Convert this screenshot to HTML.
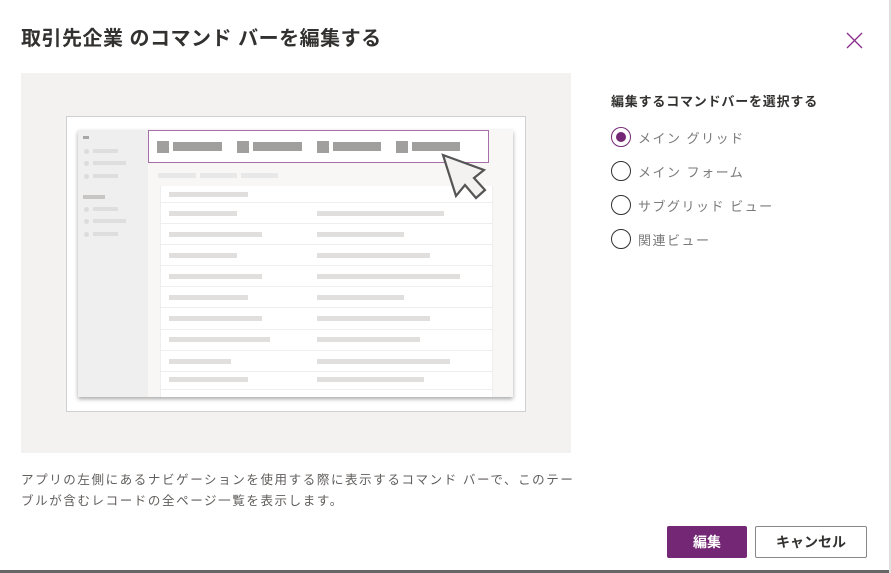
<!DOCTYPE html>
<html><head><meta charset="utf-8"><style>
*{margin:0;padding:0;box-sizing:border-box}
body{width:891px;height:573px;background:#fff;position:relative;overflow:hidden;font-family:"Liberation Sans","Noto Sans CJK JP",sans-serif;color:#323130}
.a{position:absolute}
.t{left:21px;top:22px;font-size:20px;font-weight:bold;color:#323130;letter-spacing:0.5px}
.b{position:absolute;background:#e1dfdd;height:5px}
.c{position:absolute;background:#a19f9d}
.d{position:absolute;width:5px;height:5px;border-radius:50%;background:#dcdcdc}
.s{position:absolute;background:#dedede;height:4px}
.r{position:absolute;left:611px;width:20px;height:20px;border:1.5px solid #323130;border-radius:50%}
.rl{position:absolute;left:638px;font-size:13px;color:#7a7a7a;letter-spacing:1.5px}
</style></head><body>
<div class="a t">取引先企業 のコマンド バーを編集する</div>
<svg class="a" style="left:846px;top:32px" width="17" height="17"><path d="M1 1L16 16M16 1L1 16" stroke="#8a2c8a" stroke-width="1.3"/></svg>
<div class="a" style="left:21px;top:73px;width:550px;height:380px;background:#f3f2f1"></div>
<div class="a" style="left:66px;top:116px;width:460px;height:296px;background:#fff;border:1px solid #d0d0d0"></div>
<div class="a" style="left:78px;top:130px;width:435px;height:267px;background:#f8f7f6;box-shadow:0 2px 4px rgba(0,0,0,.35)"></div>
<div class="a" style="left:78px;top:130px;width:70px;height:267px;background:#efefef"></div>
<div class="a" style="left:83px;top:136px;width:6px;height:3px;background:#a8a8a8"></div>
<div class="d" style="left:84px;top:149px"></div><div class="s" style="left:93px;top:149px;width:25px"></div>
<div class="d" style="left:84px;top:161px"></div><div class="s" style="left:93px;top:161px;width:33px"></div>
<div class="d" style="left:84px;top:174px"></div><div class="s" style="left:93px;top:174px;width:25px"></div>
<div class="a" style="left:83px;top:195px;width:22px;height:4px;background:#c8c6c4"></div>
<div class="d" style="left:84px;top:207px"></div><div class="s" style="left:93px;top:207px;width:25px"></div>
<div class="d" style="left:84px;top:219px"></div><div class="s" style="left:93px;top:219px;width:33px"></div>
<div class="d" style="left:84px;top:232px"></div><div class="s" style="left:93px;top:232px;width:25px"></div>
<div class="a" style="left:148px;top:130px;width:341px;height:33px;border:1.5px solid #a66fa8;background:#fff"></div>
<div class="c" style="left:157px;top:141px;width:12px;height:12px"></div><div class="c" style="left:173px;top:142px;width:49px;height:9px"></div>
<div class="c" style="left:237px;top:141px;width:12px;height:12px"></div><div class="c" style="left:253px;top:142px;width:49px;height:9px"></div>
<div class="c" style="left:317px;top:141px;width:12px;height:12px"></div><div class="c" style="left:333px;top:142px;width:48px;height:9px"></div>
<div class="c" style="left:396px;top:141px;width:12px;height:12px"></div><div class="c" style="left:412px;top:142px;width:48px;height:9px"></div>
<div class="b" style="left:158px;top:173px;width:38px;background:#e8e8e8"></div>
<div class="b" style="left:200px;top:173px;width:37px;background:#e8e8e8"></div>
<div class="b" style="left:241px;top:173px;width:37px;background:#e8e8e8"></div>
<div class="a" style="left:160px;top:186px;width:333px;height:211px;background:#fff;border-left:1px solid #eee;border-right:1px solid #eee"></div>
<div class="b" style="left:169px;top:192px;width:79px"></div>
<div class="a" style="left:160px;top:202px;width:333px;height:1px;background:#eee"></div>
<div class="a" style="left:160px;top:223px;width:333px;height:1px;background:#eee"></div>
<div class="a" style="left:160px;top:244px;width:333px;height:1px;background:#eee"></div>
<div class="a" style="left:160px;top:265px;width:333px;height:1px;background:#eee"></div>
<div class="a" style="left:160px;top:286px;width:333px;height:1px;background:#eee"></div>
<div class="a" style="left:160px;top:307px;width:333px;height:1px;background:#eee"></div>
<div class="a" style="left:160px;top:329px;width:333px;height:1px;background:#eee"></div>
<div class="a" style="left:160px;top:350px;width:333px;height:1px;background:#eee"></div>
<div class="a" style="left:160px;top:371px;width:333px;height:1px;background:#eee"></div>
<div class="a" style="left:160px;top:389px;width:333px;height:1px;background:#eee"></div>
<div class="b" style="left:169px;top:211px;width:68px"></div><div class="b" style="left:317px;top:211px;width:127px"></div>
<div class="b" style="left:169px;top:232px;width:93px"></div><div class="b" style="left:317px;top:232px;width:87px"></div>
<div class="b" style="left:169px;top:253px;width:68px"></div><div class="b" style="left:317px;top:253px;width:113px"></div>
<div class="b" style="left:169px;top:274px;width:93px"></div><div class="b" style="left:317px;top:274px;width:143px"></div>
<div class="b" style="left:169px;top:295px;width:79px"></div><div class="b" style="left:317px;top:295px;width:87px"></div>
<div class="b" style="left:169px;top:316px;width:93px"></div><div class="b" style="left:317px;top:316px;width:113px"></div>
<div class="b" style="left:169px;top:337px;width:101px"></div><div class="b" style="left:317px;top:337px;width:103px"></div>
<div class="b" style="left:169px;top:359px;width:62px"></div><div class="b" style="left:317px;top:359px;width:133px"></div>
<div class="b" style="left:169px;top:377px;width:79px"></div><div class="b" style="left:317px;top:377px;width:107px"></div>
<svg class="a" style="left:0;top:0" width="891" height="573"><polygon points="443,155 456,196 465,185 476,198 485,190 474,178 484,170" fill="#f3f2f1" stroke="#555" stroke-width="2.2" stroke-linejoin="miter"/></svg>
<div class="a" style="left:21px;top:470px;width:600px;font-size:12.5px;line-height:21px;color:#605e5c;letter-spacing:1.6px;white-space:nowrap">アプリの左側にあるナビゲーションを使用する際に表示するコマンド バーで、このテー<br>ブルが含むレコードの全ページ一覧を表示します。</div>
<div class="a" style="left:611px;top:91px;font-size:13px;font-weight:bold;color:#323130;letter-spacing:0.8px">編集するコマンドバーを選択する</div>
<div class="r" style="top:127px;border-color:#742774"><div style="position:absolute;left:3.5px;top:3.5px;width:10px;height:10px;border-radius:50%;background:#742774"></div></div>
<div class="rl" style="top:128px">メイン グリッド</div>
<div class="r" style="top:161px"></div><div class="rl" style="top:162px">メイン フォーム</div>
<div class="r" style="top:195px"></div><div class="rl" style="top:196px">サブグリッド ビュー</div>
<div class="r" style="top:229px"></div><div class="rl" style="top:230px">関連ビュー</div>
<div class="a" style="left:667px;top:526px;width:80px;height:32px;background:#742774;border-radius:2px;color:#fff;font-size:14px;font-weight:bold;text-align:center;line-height:32px">編集</div>
<div class="a" style="left:755px;top:526px;width:112px;height:32px;border:1px solid #8a8886;border-radius:2px;color:#323130;font-size:14px;font-weight:bold;text-align:center;line-height:30px">キャンセル</div>
<div class="a" style="left:0;top:570px;width:891px;height:3px;background:#666"></div>
<div class="a" style="left:889px;top:0;width:2px;height:573px;background:#e0e0e0"></div>
</body></html>
